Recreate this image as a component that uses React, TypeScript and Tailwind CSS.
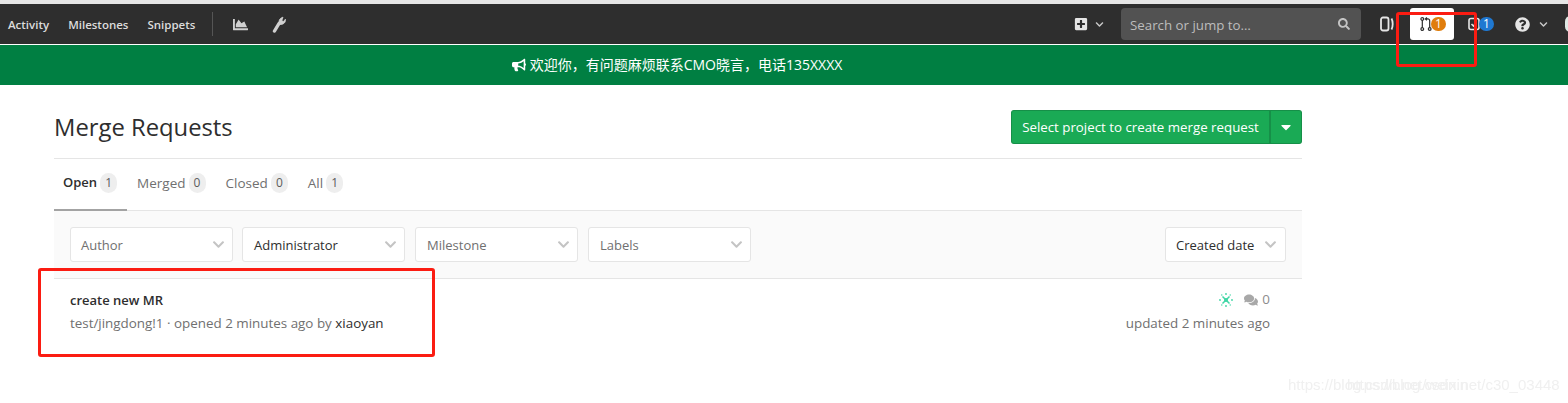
import { FaChartArea, FaPlusSquare, FaSearch, FaQuestionCircle, FaBullhorn, FaComments, FaChevronDown, FaCaretDown } from "react-icons/fa";

const font = { fontFamily: '"Open Sans", "Noto Sans CJK SC", sans-serif' };

function Filter({ label, dark, first }: { label: string; dark?: boolean; first?: boolean }) {
  return (
    <div className={`flex h-[35px] w-[163px] items-center justify-between rounded-[3px] border border-[#e5e5e5] bg-white pr-[7px] ${first ? "mr-[9px] pl-[10px]" : "mr-[10px] pl-[11px]"}`}>
      <span className={`pt-[2px] text-[13px] ${dark ? "text-[#2e2e2e]" : "text-[#707070]"}`}>{label}</span>
      <FaChevronDown className="h-[13px] w-[13px] text-[#c4c4c4]" />
    </div>
  );
}

function Tab({ label, count, active }: { label: string; count: number; active?: boolean }) {
  return (
    <div className={`flex h-[52px] items-center gap-[3px] ${active ? "border-b-2 border-[#a3a3a3] pb-[2px] pl-[9px] pr-[10px] font-semibold text-[#2e2e2e]" : "px-[10px] pb-[4px] text-[#707070]"}`}>
      <span className={active ? "text-[13px]" : "text-[13.5px]"}>{label}</span>
      <span className="flex h-[20px] min-w-[17px] items-center justify-center rounded-[9px] bg-[#eeeeee] px-[5px] text-[12px] font-normal text-[#5c5c5c]">{count}</span>
    </div>
  );
}

export default function App() {
  return (
    <div className="relative h-[403px] w-[1568px] overflow-hidden bg-white" style={font}>
      <div className="h-[4px] bg-[#e6e6e6]" />
      <nav className="flex h-[40px] items-center bg-[#2e2e2e] text-[#dcdcdc]">
        <div className="flex items-center gap-[19px] pl-[8px] pt-[2px] text-[11.5px] font-semibold">
          <span>Activity</span>
          <span>Milestones</span>
          <span>Snippets</span>
        </div>
        <div className="ml-[17px] h-[24px] w-px bg-[#555555]" />
        <FaChartArea className="ml-[20px] h-[15px] w-[15px] text-[#d0d0d0]" />
        <svg className="ml-[24px] h-[17px] w-[14px]" viewBox="0 0 14 17" fill="none" stroke="#d0d0d0" strokeLinecap="round">
          <path d="M2.5 15 7 7.5" strokeWidth="3.4" />
          <path d="M7.5 8.5C6 5.5 7.5 2 11 1.2L9.8 4.6l1.6 1 2-2.4c.5 3-1.6 5.4-5.4 5.3z" fill="#d0d0d0" strokeWidth="0.8" />
        </svg>
        <div className="ml-auto flex items-center">
          <FaPlusSquare className="h-[14px] w-[14px] text-[#e5e5e5]" />
          <FaChevronDown className="ml-[7px] h-[9px] w-[9px] text-[#c8c8c8]" />
          <div className="ml-[17px] flex h-[32px] w-[240px] items-center justify-between rounded-[4px] bg-[#525252] pl-[9px] pr-[11px]">
            <span className="pt-[3px] text-[13.3px] text-[#bdbdbd]">Search or jump to…</span>
            <FaSearch className="h-[12px] w-[12px] text-[#c4c4c4]" />
          </div>
          <svg className="ml-[19px] h-[16px] w-[14px]" viewBox="0 0 14 16" fill="none" stroke="#e5e5e5">
            <rect x="1" y="1.5" width="7.5" height="13" rx="2" strokeWidth="1.8" />
            <path d="M11.5 2.5c1.6 3 1.6 8 0 11" strokeWidth="1.8" />
          </svg>
          <div className="ml-[16px] flex h-[32px] w-[44px] items-center rounded-[3px] bg-white pl-[10px]">
            <svg className="h-[16px] w-[12px]" viewBox="0 0 13 16" fill="none" stroke="#2e2e2e" strokeWidth="1.3">
              <circle cx="2.5" cy="2.5" r="1.5" />
              <circle cx="2.5" cy="13.5" r="1.5" />
              <circle cx="10.5" cy="13.5" r="1.5" />
              <path d="M2.5 4v8M10.5 12V4.5a2 2 0 0 0-2-2H6M7.5 1 5.8 2.5 7.5 4" />
            </svg>
            <span className="-ml-[1px] flex h-[14px] w-[15px] items-center justify-center rounded-full bg-[#e07d0c] text-[12px] leading-none text-white">1</span>
          </div>
          <svg className="ml-[14px] h-[14px] w-[12px]" viewBox="0 0 12 14" fill="none" stroke="#e5e5e5" strokeWidth="1.6">
            <rect x="1" y="1.5" width="10" height="11" rx="2" />
            <path d="M3.5 7l2 2 3-3.5" />
          </svg>
          <span className="-ml-[1px] flex h-[14px] w-[15px] items-center justify-center rounded-full bg-[#1f78d1] text-[12px] leading-none text-white">1</span>
          <FaQuestionCircle className="ml-[21px] h-[15px] w-[15px] text-[#e5e5e5]" />
          <FaChevronDown className="ml-[9px] h-[9px] w-[9px] text-[#c8c8c8]" />
          <div className="ml-[17px] -mr-[8px] h-[16px] w-[11px] rounded-full bg-[#dfe8e4]" />
        </div>
      </nav>
      <div className="h-px bg-white" />
      <div className="flex h-[40px] items-center justify-center bg-[#007f42] pb-[1px] pr-[214px] text-[14px] text-white">
        <FaBullhorn className="mr-[4px] h-[14px] w-[14px]" />
        <span>欢迎你，有问题麻烦联系CMO晓言，电话135XXXX</span>
      </div>

      <main className="ml-[54px] w-[1248px]">
        <div className="flex h-[74px] items-center justify-between border-b border-[#e5e5e5] pt-[11px]">
          <h1 className="pt-[1px] text-[23.8px] font-normal leading-none text-[#2e2e2e]">Merge Requests</h1>
          <div className="flex h-[34px] text-[13.3px] text-white">
            <div className="flex w-[260px] items-center justify-center rounded-l-[3px] border border-r-2 border-[#168f48] bg-[#1aaa55] pt-[1px]">Select project to create merge request</div>
            <div className="flex w-[31px] items-center justify-center rounded-r-[3px] border border-l-0 border-[#168f48] bg-[#1aaa55]">
              <FaCaretDown className="h-[16px] w-[16px]" />
            </div>
          </div>
        </div>
        <div className="flex h-[52px] border-b border-[#e5e5e5]">
          <Tab label="Open" count={1} active />
          <Tab label="Merged" count={0} />
          <Tab label="Closed" count={0} />
          <Tab label="All" count={1} />
        </div>
        <div className="flex h-[68px] items-center border-b border-[#e5e5e5] bg-[#fafafa] pl-[16px] pr-[16px]">
          <Filter label="Author" first />
          <Filter label="Administrator" dark />
          <Filter label="Milestone" />
          <Filter label="Labels" />
          <div className="ml-auto flex h-[35px] w-[121px] items-center justify-between rounded-[3px] border border-[#e5e5e5] bg-white pl-[10px] pr-[8px]">
            <span className="pt-[2px] text-[13px] text-[#2e2e2e]">Created date</span>
            <FaChevronDown className="h-[13px] w-[13px] text-[#c4c4c4]" />
          </div>
        </div>
        <div className="flex justify-between pl-[16px] pr-[32px] pt-[11px] text-[13.4px]">
          <div>
            <div className="h-[22px] text-[13px] font-semibold leading-[21px] text-[#2e2e2e]">create new MR</div>
            <div className="leading-[23px] text-[#707070]">test/jingdong!1 · opened 2 minutes ago by <span className="text-[#2e2e2e]">xiaoyan</span></div>
          </div>
          <div className="flex flex-col items-end">
            <div className="mb-[3px] flex h-[19px] items-center">
              <svg className="h-[14px] w-[14px]" viewBox="0 0 14 14" fill="#3fd6a5">
                <circle cx="7" cy="7" r="2" />
                <path d="M3.5 3.5l7 7M10.5 3.5l-7 7" stroke="#3fd6a5" strokeWidth="1.5" />
                <circle cx="7" cy="1" r="0.9" /><circle cx="7" cy="13" r="0.9" /><circle cx="1" cy="7" r="0.9" /><circle cx="13" cy="7" r="0.9" />
                <circle cx="2.8" cy="2" r="0.7" /><circle cx="11.2" cy="2" r="0.7" /><circle cx="2.8" cy="12" r="0.7" /><circle cx="11.2" cy="12" r="0.7" />
              </svg>
              <FaComments className="ml-[11px] h-[14px] w-[14px] text-[#a8a8a8]" />
              <span className="ml-[4px] text-[#8c8c8c]">0</span>
            </div>
            <div className="leading-[23px] text-[#707070]">updated 2 minutes ago</div>
          </div>
        </div>
      </main>

      <div className="absolute left-[1396px] top-[12px] h-[55px] w-[81px] rounded-[3px] border-[3px] border-[#fb1c12]" />
      <div className="absolute left-[38px] top-[268px] h-[89px] w-[397px] rounded-[3px] border-[3px] border-[#fb1c12]" />
      <div className="absolute left-[1288px] top-[376px] text-[15px] leading-[18px] text-[#f0f0f0] blur-[0.4px]" style={{ fontFamily: '"Liberation Sans", sans-serif' }}>https://blog.csdn.net/weixin</div>
      <div className="absolute left-[1347px] top-[376px] text-[15px] leading-[18px] text-[#f0f0f0] blur-[0.4px]" style={{ fontFamily: '"Liberation Sans", sans-serif' }}>https://blog.csdn.net/c30_03448</div>
    </div>
  );
}
